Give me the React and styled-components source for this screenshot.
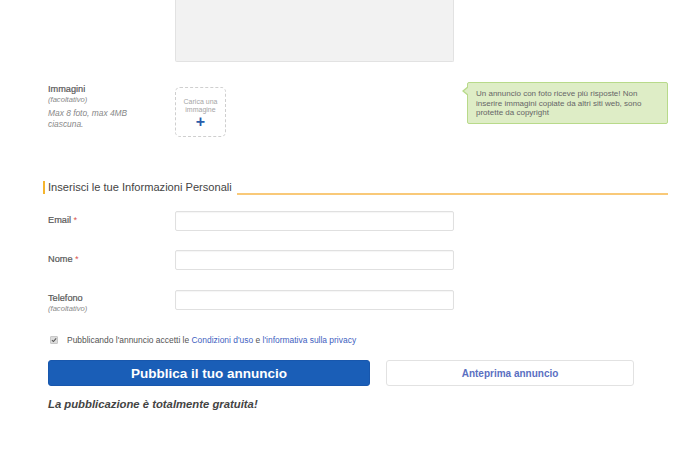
import React from 'react';
import styled, { createGlobalStyle } from 'styled-components';

const GlobalStyle = createGlobalStyle`
  html, body {
    margin: 0;
    padding: 0;
    background: #fff;
    font-family: "Liberation Sans", Arial, sans-serif;
    overflow: hidden;
  }
`;

const App = () => {
  return (
    <>
      <GlobalStyle />
      <Form>
        <Row>
          <span />
          <TextArea />
        </Row>

        <Row $top={20}>
          <LabelCell>
            <Label>Immagini</Label>
            <Optional>(facoltativo)</Optional>
            <Hint>Max 8 foto, max 4MB ciascuna.</Hint>
          </LabelCell>
          <UploadBox>
            <UploadText>Carica una immagine</UploadText>
            <Plus>+</Plus>
          </UploadBox>
          <Tooltip>
            Un annuncio con foto riceve più risposte! Non inserire immagini copiate da
            altri siti web, sono protette da copyright
          </Tooltip>
        </Row>

        <Heading>
          <HeadingText>Inserisci le tue Informazioni Personali</HeadingText>
          <HeadingLine />
        </Heading>

        <Row $top={17}>
          <LabelCell $pad={4}>
            <Label>Email <Req>*</Req></Label>
          </LabelCell>
          <Input type="text" />
        </Row>

        <Row $top={19}>
          <LabelCell $pad={4}>
            <Label>Nome <Req>*</Req></Label>
          </LabelCell>
          <Input type="text" />
        </Row>

        <Row $top={20}>
          <LabelCell $pad={3}>
            <Label>Telefono</Label>
            <Optional>(facoltativo)</Optional>
          </LabelCell>
          <Input type="text" />
        </Row>

        <Consent>
          <CheckBox>
            <svg width="6" height="6" viewBox="0 0 10 10">
              <path d="M1.5 5.2 L4 7.6 L8.6 2.2" fill="none" stroke="#555" strokeWidth="1.8" />
            </svg>
          </CheckBox>
          <span>
            Pubblicando l'annuncio accetti le <Link>Condizioni d'uso</Link> e{' '}
            <Link>l'informativa sulla privacy</Link>
          </span>
        </Consent>

        <Buttons>
          <PrimaryButton>Pubblica il tuo annuncio</PrimaryButton>
          <SecondaryButton>Anteprima annuncio</SecondaryButton>
        </Buttons>

        <Free>La pubblicazione è totalmente gratuita!</Free>
      </Form>
    </>
  );
};

export default App;

const Form = styled.div`
  width: 700px;
  height: 450px;
  box-sizing: border-box;
  padding: 0 32px 0 48px;
  color: #444;
`;

const Row = styled.div`
  display: grid;
  grid-template-columns: 127px 279px auto;
  align-items: start;
  margin-top: ${(p) => p.$top || 0}px;
`;

const TextArea = styled.div`
  height: 62px;
  box-sizing: border-box;
  background: #f2f2f2;
  border: 1px solid #e2e2e2;
  border-top: none;
  border-radius: 0 0 2px 2px;
`;

const LabelCell = styled.div`
  display: flex;
  flex-direction: column;
  padding-top: ${(p) => (p.$pad !== undefined ? p.$pad : 2)}px;
`;

const Label = styled.div`
  font-size: 9.2px;
  line-height: 11px;
  color: #585858;
  font-weight: normal;
  -webkit-text-stroke: 0.2px #585858;
`;

const Req = styled.span`
  color: #d9534f;
  -webkit-text-stroke: 0;
`;

const Optional = styled.div`
  font-size: 7.6px;
  line-height: 9px;
  font-style: italic;
  color: #888;
`;

const Hint = styled.div`
  margin-top: 4px;
  width: 92px;
  font-size: 8.4px;
  line-height: 11px;
  font-style: italic;
  color: #888;
`;

const UploadBox = styled.div`
  margin-top: 5px;
  width: 51px;
  height: 50px;
  box-sizing: border-box;
  border: 1px dashed #cfcfcf;
  border-radius: 5px;
  display: flex;
  flex-direction: column;
  align-items: center;
  padding-top: 10px;
`;

const UploadText = styled.div`
  width: 40px;
  text-align: center;
  font-size: 7px;
  line-height: 8px;
  color: #a5a5a5;
`;

const Plus = styled.div`
  margin-top: 1px;
  font-size: 16px;
  line-height: 14px;
  font-weight: bold;
  color: #2a5caa;
`;

const Tooltip = styled.div`
  position: relative;
  margin-left: 13px;
  width: 201px;
  box-sizing: border-box;
  padding: 6px 8px 5px 8px;
  background: #deedc6;
  border: 1px solid #b8da8a;
  border-radius: 2px;
  font-size: 8px;
  line-height: 9.5px;
  color: #666;

  &::before {
    content: '';
    position: absolute;
    left: -6px;
    top: 3px;
    border-style: solid;
    border-width: 5px 6px 5px 0;
    border-color: transparent #b8da8a transparent transparent;
  }
  &::after {
    content: '';
    position: absolute;
    left: -4px;
    top: 4px;
    border-style: solid;
    border-width: 4px 5px 4px 0;
    border-color: transparent #deedc6 transparent transparent;
  }
`;

const Heading = styled.div`
  display: flex;
  align-items: flex-end;
  margin: 44px 0 0 -5px;
  height: 13px;
  border-left: 2px solid #f5b52e;
  padding-left: 3px;
`;

const HeadingText = styled.div`
  font-size: 11.1px;
  line-height: 13px;
  color: #444;
  white-space: nowrap;
`;

const HeadingLine = styled.div`
  flex: 1;
  height: 2px;
  margin-left: 5px;
  margin-bottom: -1px;
  background: #f9c978;
`;

const Input = styled.input`
  width: 279px;
  height: 20px;
  box-sizing: border-box;
  border: 1px solid #e0e0e0;
  border-radius: 2px;
  box-shadow: inset 0 1px 1px rgba(0, 0, 0, 0.04);
  outline: none;
  padding: 0 6px;
  font-family: inherit;
`;

const Consent = styled.div`
  display: flex;
  align-items: center;
  gap: 9px;
  margin: 22px 0 0 2px;
  font-size: 8.45px;
  line-height: 10px;
  color: #555;
`;

const CheckBox = styled.span`
  width: 6px;
  height: 6px;
  border-radius: 1px;
  background: #dcdcdc;
  border: 1px solid #c8c8c8;
  display: flex;
  align-items: center;
  justify-content: center;
  box-sizing: content-box;
`;

const Link = styled.span`
  color: #3f5fbf;
`;

const Buttons = styled.div`
  display: flex;
  gap: 16px;
  margin-top: 15px;
`;

const PrimaryButton = styled.button`
  width: 322px;
  height: 26px;
  border: 1px solid #1857ad;
  border-radius: 3px;
  background: #1a5eb7;
  color: #fff;
  font-family: inherit;
  font-size: 13.5px;
  font-weight: bold;
  padding: 0;
`;

const SecondaryButton = styled.button`
  width: 248px;
  height: 26px;
  border: 1px solid #e2e2e2;
  border-radius: 3px;
  background: #fff;
  color: #5a6fc2;
  font-family: inherit;
  font-size: 10px;
  font-weight: bold;
  padding: 0;
`;

const Free = styled.div`
  margin-top: 11px;
  font-size: 11.3px;
  line-height: 14px;
  font-weight: bold;
  font-style: italic;
  color: #444;
`;
